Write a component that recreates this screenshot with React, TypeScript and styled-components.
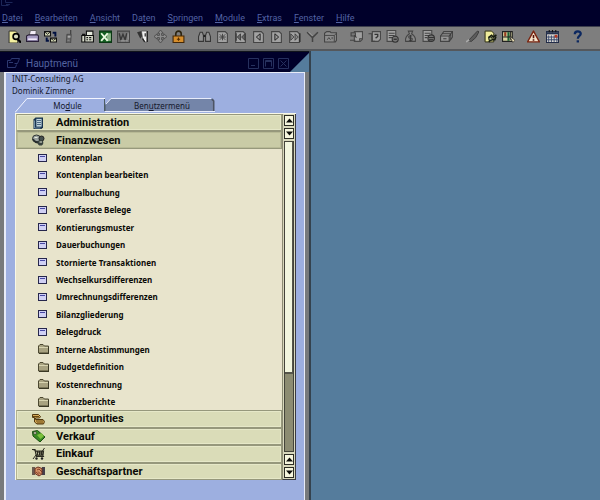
import React from 'react';
import styled, { createGlobalStyle, css } from 'styled-components';

const GlobalStyle = createGlobalStyle`
  * { box-sizing: border-box; }
  html, body { margin: 0; padding: 0; }
  body {
    font-family: "Noto Sans", "Open Sans", "DejaVu Sans", sans-serif;
    background: #557c9c;
  }
  button { font: inherit; color: inherit; border: 0; padding: 0; margin: 0; background: none; }
  svg { display: block; }
`;

/* ---------- icons ---------- */

const page = (stroke: string, fill: string) => (
  <path d="M1.500 1.500h7l2 2v8h-9z" fill={fill} stroke={stroke} />
);

const toolIcons: Record<string, React.ReactNode> = {
  preview: (
    <>
      <path d="M1 1h6l2 2v9H1z" fill="#f4f0a0" stroke="#222" strokeWidth=".8" />
      <circle cx="7.4" cy="6" r="2.7" fill="#d8dcc0" stroke="#000" strokeWidth="1.5" />
      <path d="M9 8.500l3 3.200" stroke="#000" strokeWidth="2" />
    </>
  ),
  print: (
    <>
      <path d="M3 5l1-4.500h5.500L9 5z" fill="#f4eef8" stroke="#555" strokeWidth=".8" />
      <path d="M.5 5.500l2-1h8l1 1v5H.500z" fill="#a49ac0" stroke="#2a2038" />
      <path d="M2 8.500h8" stroke="#f0e8f8" strokeWidth="1.500" />
    </>
  ),
  mail: (
    <>
      <path d="M.5 1.500h5.500v4H.500z" fill="#d8dcb8" stroke="#111" />
      <path d="M6 7.500h5.500v3.500H6z" fill="#d8dcb8" stroke="#111" />
      <path d="M8 2.500h2.500V6M2.500 7v3h2" fill="none" stroke="#001040" strokeWidth="1.800" />
      <path d="M1 2l2.300 2L5.500 2M6.500 8l2.200 1.500L11 8" fill="none" stroke="#111" strokeWidth=".8" />
    </>
  ),
  phone: (
    <>
      <path d="M8 0v4" stroke="#444" strokeWidth="1.200" />
      <path d="M4.500 4h4L8 12H4z" fill="#656565" stroke="#484848" strokeWidth=".8" />
      <path d="M5.500 5.500h2v1.500h-2zM5 9.500h2" fill="#b4b4b4" stroke="#a0a0a0" strokeWidth=".6" />
    </>
  ),
  fax: (
    <>
      <path d="M5 1h6v4H5z" fill="#e4e8dc" stroke="#111" />
      <path d="M.7 5h10.800v6H.700z" fill="#d4d8c8" stroke="#111" />
      <path d="M1 4h2.500v7M5 7h1.500M7.500 7H9.500M5 9h1.500M7.500 9H9.500" fill="none" stroke="#111" strokeWidth="1.100" />
    </>
  ),
  excel: (
    <>
      <path d="M.5 1h11v10.500H.500z" fill="#135c20" stroke="#0b3614" />
      <path d="M7 3h4v7H7z" fill="#8cb488" />
      <path d="M2 3l6 7M8 3l-6 7" stroke="#eafae0" strokeWidth="1.700" />
    </>
  ),
  word: (
    <>
      <path d="M.5 1h11v10.500H.500z" fill="#747474" stroke="#464646" />
      <path d="M2 3l1.500 6L5.500 4l2 5L9 3" fill="none" stroke="#383838" strokeWidth="1.300" />
      <path d="M3 10h7M10.300 3v6" stroke="#a4a4a4" strokeWidth=".8" />
    </>
  ),
  report: (
    <>
      <path d="M1 2l4-1 3 1-4 6z" fill="#333" />
      <path d="M5 1l5 0v10L8 11 6 7z" fill="#eee" stroke="#444" strokeWidth=".6" />
      <path d="M8.500 3v3M6 8l2 3M10.500 1v10" stroke="#222" strokeWidth="1.100" />
    </>
  ),
  move: (
    <path d="M6 0l2.500 3H7v2h2V3.500L12 6 9 8.500V7H7v2h1.500L6 12 3.500 9H5V7H3v1.500L0 6l3-2.500V5h2V3H3.500z" fill="#8c8c8c" stroke="#4a4a4a" strokeWidth=".8" />
  ),
  lock: (
    <>
      <path d="M3.500 6V3.500a2.500 2.500 0 0 1 5 0V6" fill="none" stroke="#2c2410" strokeWidth="1.500" />
      <path d="M1 5.500h10v6H1z" fill="#d68e2c" stroke="#442808" />
      <path d="M6 7v3M4.500 8.500h3" stroke="#542c00" />
    </>
  ),
  find: (
    <>
      <path d="M2 2h2l1 3v5.500H.500V6zM8 2h2l1.500 4v4.500H7V5z" fill="#909090" stroke="#363636" />
      <path d="M5 5.500h2" stroke="#222" strokeWidth="2" />
    </>
  ),
  add: (<>{page('#444', '#a2a2a2')}<path d="M3.500 4l5 5M8.500 4l-5 5M6 3.500v6M3 6.500h6" stroke="#444" strokeWidth=".9" /></>),
  first: (<>{page('#444', '#a2a2a2')}<path d="M6 3.500v6L3 6.500zM10 3.500v6L7 6.500z" fill="#666" stroke="#222" strokeWidth=".6" /><path d="M2 3v7" stroke="#333" /></>),
  prev: (<>{page('#444', '#a2a2a2')}<path d="M7.500 3.500v6L4 6.500z" fill="#999" stroke="#222" strokeWidth=".9" /></>),
  next: (<>{page('#444', '#a2a2a2')}<path d="M4.500 3.500v6L8 6.500z" fill="#999" stroke="#222" strokeWidth=".9" /></>),
  last: (<>{page('#444', '#a2a2a2')}<path d="M2.500 3.500v6l3-3zM6.500 3.500v6l3-3z" fill="#888" stroke="#222" strokeWidth=".6" /><path d="M11 3v8" stroke="#222" /></>),
  filter: (<><path d="M1 2l5 5 5-5M6 6.500V11" fill="none" stroke="#444" strokeWidth="1.400" /><path d="M2.500 2L6 5.500" stroke="#aaa" strokeWidth=".8" /></>),
  sort: (
    <>
      <path d="M.5 3l2-1.500h3l1 1h5v7l-1 1.500h-10z" fill="#8c8c8c" stroke="#444" />
      <path d="M.5 5h9v6M9.500 5l2-2M3 9l1.500-2L6 9M7.500 6.500v2" fill="none" stroke="#444" strokeWidth=".9" />
    </>
  ),
  base: (<><path d="M4 1.500h7.500v7L9.500 10.500H4z" fill="#a0a0a0" stroke="#484848" /><path d="M1 2.500h4v3H1zM0 9.500h5" fill="#777" stroke="#444" /><path d="M4 5l2 2M9 10V8h2" stroke="#3a3a3a" fill="none" /></>),
  target: (<><path d="M4 1.500h7.500v7L9.500 10.500H4z" fill="#a0a0a0" stroke="#484848" /><path d="M.5 3.500h3v7h3" fill="none" stroke="#444" /><path d="M6 4h3v2L7 7.500" fill="none" stroke="#333" strokeWidth="1.200" /></>),
  gross: (<><path d="M1 .5h8v10H1z" fill="#a0a0a0" stroke="#484848" /><path d="M2.500 3H8M2.500 5H8M2.500 7H6" stroke="#444" /><circle cx="8.500" cy="8.500" r="2.800" fill="#777" stroke="#333" /><path d="M7 8.500h3" stroke="#222" /></>),
  pay: (<><path d="M4 1h4L7 3.500c3 2 4 4.500 3.500 7h-9C1 8 2 5.500 5 3.500z" fill="#858585" stroke="#444" /><path d="M7.500 5.500h-3v2h3v2h-3M6 4.500v6" fill="none" stroke="#333" strokeWidth=".8" /></>),
  volume: (<><path d="M1 .5h8v10H1z" fill="#a0a0a0" stroke="#484848" /><path d="M2.500 3H8M2.500 5H8M2.500 7H5" stroke="#444" /><circle cx="8.500" cy="7.500" r="3" fill="#777" stroke="#333" /><path d="M6 7h5M6.500 9h4" stroke="#222" strokeWidth=".8" /></>),
  boxes: (<><path d="M.5 5.500l3-4h8v5l-3 4h-8z" fill="#969696" stroke="#444" /><path d="M.5 5.500h8v5M8.500 5.500l3-4M2 3.500h8v5M3 8h3" fill="none" stroke="#3c3c3c" /></>),
  pencil: (<><path d="M2 10L10.500 1l1.500.500L9 7l-4 3.500z" fill="#5c5c5c" stroke="#383838" strokeWidth=".8" /><path d="M0 11l3-2" stroke="#aaa" strokeWidth="1.500" /></>),
  settings: (<><path d="M1 1h6l2 2v8H1z" fill="#f0ec9c" stroke="#2c2c10" strokeWidth=".9" /><path d="M4 7l3-2 1.500 1.500 3-2M4.500 11l1.500-2h4l1-3" fill="none" stroke="#161c10" strokeWidth="1.500" /><circle cx="6" cy="8" r="1.600" fill="#b4c08c" stroke="#161c10" /></>),
  query: (<><path d="M.5 1.500h9v9h-9z" fill="#d8d4a0" stroke="#222" /><path d="M2 2h2v4H2z" fill="#963c20" /><path d="M5 2h2v8H5z" fill="#1c6034" /><path d="M1 6.500h8M8 1v8" stroke="#222" /><path d="M7 5.500l5 4-2 2z" fill="#e8dcb4" stroke="#222" strokeWidth=".6" /></>),
  warn: (<><path d="M6 1l5.500 10H.500z" fill="#f6e4cc" stroke="#7a2410" strokeWidth="1.300" strokeLinejoin="round" /><path d="M6 4.500v3M6 8.500V10" stroke="#541008" strokeWidth="1.500" /></>),
  calendar: (<><path d="M.5 1.500h11v10H.500z" fill="#e0dcd4" stroke="#222c48" /><path d="M0 3h12" stroke="#26324e" strokeWidth="2" /><path d="M2.500 5v6M5 5v6M7.500 5v6M10 5v6M1 6.500h10M1 9h10" stroke="#3c4c70" strokeWidth=".9" /><path d="M8 4.500h2.500V7H8z" fill="#bc3820" /><path d="M3 0v2M6 0v2M9 0v2" stroke="#111" /></>),
  help: (<><path d="M3.500 4c0-3.500 5.500-3.500 5.500-.5C9 5.500 6.300 5.500 6.300 8" fill="none" stroke="#0c2860" strokeWidth="2.100" /><path d="M5.200 9.500h2.200v2H5.200z" fill="#0c2860" /></>),
};

const moduleIcons: Record<string, React.ReactNode> = {
  admin: (<><path d="M3.500 .500h7.500v10l-1.500 1.500H1.500V2.500z" fill="#16304c" /><path d="M4 1.500h6v8.500H4z" fill="#c0d4dc" stroke="#1c3c58" strokeWidth=".8" /><path d="M5 3.500h4M5 5.500h4M5 7.500h4" stroke="#3c5c78" strokeWidth=".9" /><path d="M2.500 3.500v7.500h6" stroke="#88a8bc" strokeWidth=".8" fill="none" /></>),
  finance: (<><ellipse cx="4.500" cy="4.500" rx="4" ry="3.500" fill="#9aa2a0" stroke="#2e3432" /><path d="M1 5c1 3 4 4 7 3" fill="none" stroke="#262c2c" strokeWidth="2" /><circle cx="9.500" cy="4.500" r="2.500" fill="#44504e" stroke="#222" /><circle cx="8.500" cy="8.700" r="2.800" fill="#38423e" /><path d="M2.500 3.500h3M7.500 8h2.500" stroke="#e8ecdc" strokeWidth="1.200" /></>),
  opportunity: (<><path d="M.5 1.500h6l2 2-1 1.500h-4v1.500H11l1.500 2-1 2.500H5L2.500 9V4.500h-2z" fill="#d8ac58" stroke="#523a10" /><path d="M1 3.500h6M4 8h7.500M5 10h6" stroke="#634612" /></>),
  sales: (<><path d="M.5 1.500l5-1L13 7l-5 5L1 6z" fill="#398a22" stroke="#194c12" /><path d="M5 5l4.500-2L12 6 8.500 9z" fill="#7cc03c" /><circle cx="3" cy="3" r="1.300" fill="#f0f0d0" stroke="#222" strokeWidth=".6" /></>),
  purchase: (<><path d="M0 1.500h3l1.500 7H12M3 3h8.500L11 7H4" fill="#6c6c58" stroke="#2a2a20" strokeWidth="1.200" /><path d="M12.500 0L9 5l3 4M1 11l3-4M5.500 3v4M7.500 3v4M9.500 3v4" fill="none" stroke="#2a2a20" /><circle cx="4.500" cy="10.500" r="1.200" fill="#222" /><circle cx="10" cy="10.500" r="1.200" fill="#222" /></>),
  partner: (<><path d="M0 2h3v8H0z" fill="#6a5a50" /><path d="M10 2h3v8h-3z" fill="#45404a" /><path d="M3 3.500l3-1.500 4 1.500V9l-3 2-4-2.500z" fill="#d89468" stroke="#6c3020" /><path d="M5 5l2-1 3 3M4 7l3 2.500M6 6.500L8.500 9" fill="none" stroke="#7a3420" strokeWidth=".9" /></>),
};

const FormIcon = () => (
  <svg width="9" height="8" viewBox="0 0 9 8" aria-hidden="true">
    <rect x=".5" y=".5" width="8" height="7" fill="#d0d0f4" stroke="#26264c" />
    <path d="M2 2.500h5" stroke="#4848a4" />
  </svg>
);

const FolderIcon = () => (
  <svg width="11" height="10" viewBox="0 0 11 10" aria-hidden="true">
    <path d="M.5 9V2l1.500-1.500h3L6.500 2h4V9z" fill="#a8a280" stroke="#4c4830" />
    <path d="M1 3.500h9" stroke="#d8d4b0" />
    <path d="M1 9.500h10M10.500 3v6" stroke="#3a3824" />
  </svg>
);

/* ---------- frame ---------- */

const Shell = styled.div`
  display: flex;
  flex-direction: column;
  min-height: 100vh;
`;

const TopBar = styled.header`
  background: #00002a;
  border-bottom: 1px solid #3c3e4c;
`;

const AppCaption = styled.div`
  height: 10px;
  padding-left: 1px;
`;

const MenuBar = styled.nav`
  display: flex;
  gap: 12px;
  height: 16px;
  padding-left: 2px;
  font-family: Roboto, "Noto Sans", sans-serif;
  font-size: 9px;
  line-height: 16px;
  color: #5363a4;
`;

const MenuButton = styled.button`
  white-space: nowrap;
  u { text-underline-offset: 1px; }
`;

const ToolBar = styled.div`
  display: flex;
  align-items: center;
  gap: 7px;
  height: 24px;
  padding: 0 5px 3px;
  background: #7e7e7e;
  border-bottom: 2px solid #55585c;
`;

const ToolGroup = styled.div<{ $width: number }>`
  display: flex;
  justify-content: space-between;
  width: ${(p) => p.$width}px;
`;

const ToolButton = styled.button`
  display: grid;
  place-items: center;
  width: 18px;
  height: 16px;
`;

const Workspace = styled.main`
  display: flex;
  flex: 1;
  background: #557c9c;
`;

const MenuWindow = styled.section`
  display: flex;
  flex-direction: column;
  width: 311px;
  border-right: 2px solid #34424e;
`;

const TitleBar = styled.div`
  display: flex;
  align-items: center;
  height: 21px;
  padding: 2px 20px 0 7px;
  background: linear-gradient(135deg, #00002a 0 calc(100% - 14px), #557c9c calc(100% - 13px));
  color: #5363a0;
  border-top: 1px solid #10141c;
`;

const WindowTitle = styled.h1`
  flex: 1;
  margin: 0 0 0 6px;
  font-family: Roboto, "Noto Sans", sans-serif;
  font-size: 10px;
  font-weight: 400;
`;

const WindowControls = styled.div`
  display: flex;
  gap: 4px;
`;

const Frame = styled.div`
  display: flex;
  flex: 1;
  flex-direction: column;
  background: #777a7c;
`;

const Body = styled.div`
  display: flex;
  flex: 1;
  flex-direction: column;
  margin: 0 4px;
  padding: 0 8px 20px 9px;
  background: #9dafe0;
  border: solid #e8ecf8;
  border-width: 1px 1px 0 2px;
`;

const Identity = styled.div`
  margin-left: -3px;
  font-size: 8px;
  line-height: 12px;
  color: #14182c;
`;

const Tabs = styled.div`
  display: flex;
  height: 16px;
`;

const tabText = css`
  font-size: 8px;
  line-height: 17px;
  color: #14182c;
`;

const Tab = styled.button<{ $active?: boolean }>`
  ${tabText}
  display: grid;
  width: ${(p) => (p.$active ? 90 : 110)}px;
  height: 16px;
  > * { grid-area: 1 / 1; }
  > span { padding-left: ${(p) => (p.$active ? 15 : 4)}px; }
`;

const TreeBox = styled.div`
  display: flex;
  flex: 1;
  border-top: 1px solid #f8f8e8;
  border-left: 1px solid #f8f8e8;
  background: #e8e4cc;
`;

const Tree = styled.ul`
  display: grid;
  flex: 1;
  grid-auto-rows: minmax(16px, 1fr);
  margin: 0;
  padding: 0;
  list-style: none;
`;

const ModuleRow = styled.button<{ $open?: boolean }>`
  display: flex;
  align-items: center;
  width: 100%;
  height: 100%;
  padding-left: 14px;
  border: 1px solid #96987c;
  border-left: 2px solid #b4b490;
  outline: 1px solid ${(p) => (p.$open ? '#b8ba96' : '#e6e8c8')};
  outline-offset: -2px;
  background: ${(p) => (p.$open ? '#c9cba6' : '#dadcb8')};
  font-family: Roboto, "Noto Sans", sans-serif;
  font-size: 11px;
  font-weight: 700;
  color: #0a0a06;
  text-align: left;
`;

const ModuleIcon = styled.span`
  width: 24px;
`;

const EntryRow = styled.button`
  display: flex;
  align-items: center;
  width: 100%;
  height: 100%;
  padding-left: 22px;
  font-size: 8px;
  font-weight: 700;
  color: #0a0a06;
  text-align: left;
`;

const EntryIcon = styled.span`
  width: 18px;
`;

const ScrollBar = styled.div`
  display: flex;
  flex-direction: column;
  gap: 2px;
  width: 14px;
  padding: 1px;
  background: #d8d8bc;
  border-right: 1px solid #3c3c40;
  border-left: 1px solid #8c8c74;
  border-bottom: 1px solid #3c3c40;
`;

const ScrollButton = styled.button`
  display: grid;
  place-items: center;
  height: 11px;
  background: #f6f6de;
  border: 1px solid #2c2c24;
`;

const Track = styled.div`
  flex: 1;
  background: #8c8c72;
  border: 1px solid #44443a;
`;

const Thumb = styled.div`
  height: 75%;
  background: #f2f6de;
  border: solid #55554a;
  border-width: 0 1px 2px 0;
`;

/* ---------- data ---------- */

const menus: [string, string, string][] = [
  ['', 'D', 'atei'],
  ['', 'B', 'earbeiten'],
  ['', 'A', 'nsicht'],
  ['Da', 't', 'en'],
  ['', 'S', 'pringen'],
  ['', 'M', 'odule'],
  ['', 'E', 'xtras'],
  ['', 'F', 'enster'],
  ['', 'H', 'ilfe'],
];

const toolGroups = [
  { width: 183, items: ['preview', 'print', 'mail', 'phone', 'fax', 'excel', 'word', 'report', 'move', 'lock'] },
  { width: 145, items: ['find', 'add', 'first', 'prev', 'next', 'last', 'filter', 'sort'] },
  { width: 109, items: ['base', 'target', 'gross', 'pay', 'volume', 'boxes'] },
  { width: 54, items: ['pencil', 'settings', 'query'] },
  { width: 37, items: ['warn', 'calendar'] },
  { width: 18, items: ['help'] },
];

type Item = { label: string; icon?: string; open?: boolean; kind: 'module' | 'form' | 'folder' };

const items: Item[] = [
  { label: 'Administration', icon: 'admin', kind: 'module' },
  { label: 'Finanzwesen', icon: 'finance', kind: 'module', open: true },
  ...['Kontenplan', 'Kontenplan bearbeiten', 'Journalbuchung', 'Vorerfasste Belege', 'Kontierungsmuster',
    'Dauerbuchungen', 'Stornierte Transaktionen', 'Wechselkursdifferenzen', 'Umrechnungsdifferenzen',
    'Bilanzgliederung', 'Belegdruck'].map((label) => ({ label, kind: 'form' as const })),
  ...['Interne Abstimmungen', 'Budgetdefinition', 'Kostenrechnung', 'Finanzberichte']
    .map((label) => ({ label, kind: 'folder' as const })),
  { label: 'Opportunities', icon: 'opportunity', kind: 'module' },
  { label: 'Verkauf', icon: 'sales', kind: 'module' },
  { label: 'Einkauf', icon: 'purchase', kind: 'module' },
  { label: 'Geschäftspartner', icon: 'partner', kind: 'module' },
];

const Arrow = ({ down }: { down?: boolean }) => (
  <svg width="7" height="5" viewBox="0 0 7 5" aria-hidden="true">
    <path d={down ? 'M0 .5h7L3.500 4.500z' : 'M0 4.500h7L3.500 .500z'} fill="#0c0c08" />
  </svg>
);

const ControlIcon = ({ d }: { d: string }) => (
  <svg width="11" height="11" viewBox="0 0 11 11" fill="none" stroke="#26305e" aria-hidden="true">
    <path d="M.5 .5h10v10H.5z" />
    <path d={d} />
  </svg>
);

export default function App() {
  return (
    <Shell>
      <GlobalStyle />
      <TopBar>
        <AppCaption>
          <svg width="13" height="6" viewBox="0 0 13 6" fill="none" stroke="#1c2658" aria-hidden="true">
            <path d="M.5 0v5.500h7M4.500 0v2.500h7M5 4.500h4" />
          </svg>
        </AppCaption>
        <MenuBar aria-label="Hauptleiste">
          {menus.map(([before, key, after]) => (
            <MenuButton key={key} type="button">{before}<u>{key}</u>{after}</MenuButton>
          ))}
        </MenuBar>
      </TopBar>
      <ToolBar role="toolbar">
        {toolGroups.map((group) => (
          <ToolGroup key={group.items[0]} $width={group.width}>
            {group.items.map((name) => (
              <ToolButton key={name} type="button" aria-label={name}>
                <svg width="13" height="13" viewBox="0 0 12 12" fill="none">{toolIcons[name]}</svg>
              </ToolButton>
            ))}
          </ToolGroup>
        ))}
      </ToolBar>
      <Workspace>
        <MenuWindow>
          <TitleBar>
            <svg width="13" height="10" viewBox="0 0 13 10" fill="none" stroke="#2c3870" aria-hidden="true">
              <path d="M4.500 .500h8l-2 5h-3M4.500 .500l-1 2h-3v7h8l1-3M2 4.500h4" />
            </svg>
            <WindowTitle>Hauptmenü</WindowTitle>
            <WindowControls>
              <button type="button" aria-label="Minimieren"><ControlIcon d="M3 7.500h4" /></button>
              <button type="button" aria-label="Maximieren"><ControlIcon d="M2.500 8.500v-6h6v6M2.500 3.500h6" /></button>
              <button type="button" aria-label="Schließen"><ControlIcon d="M2.500 2.500l6 6M8.500 2.500l-6 6" /></button>
            </WindowControls>
          </TitleBar>
          <Frame>
            <Body>
              <Identity>
                <div>INIT-Consulting AG</div>
                <div>Dominik Zimmer</div>
              </Identity>
              <Tabs role="tablist">
                <Tab type="button" role="tab" aria-selected="true" $active>
                  <svg width="90" height="16" viewBox="0 0 90 16" fill="none" aria-hidden="true">
                    <path d="M0 15.500L12 1.500h78" stroke="#f4f6ff" />
                    <path d="M89.500 2v12" stroke="#4c5c64" />
                  </svg>
                  <span>Mo<u>d</u>ule</span>
                </Tab>
                <Tab type="button" role="tab" aria-selected="false">
                  <svg width="110" height="16" viewBox="0 0 110 16" fill="none" aria-hidden="true">
                    <path d="M0 14V7l6-5h101v12z" fill="#7485a9" />
                    <path d="M1 7l5-5.500h100" stroke="#e8ecfa" />
                    <path d="M0 8v6" stroke="#4c5c64" />
                    <path d="M107 2l1.500 2v10" stroke="#4c5464" strokeWidth="2" />
                    <path d="M0 14.500h110" stroke="#e8ecfa" />
                  </svg>
                  <span>Ben<u>u</u>tzermenü</span>
                </Tab>
              </Tabs>
              <TreeBox>
                <Tree>
                  {items.map((item) => (
                    <li key={item.label}>
                      {item.kind === 'module' ? (
                        <ModuleRow type="button" $open={item.open} aria-expanded={!!item.open}>
                          <ModuleIcon>
                            <svg width="13" height="12" viewBox="0 0 13 12" fill="none" aria-hidden="true">
                              {moduleIcons[item.icon!]}
                            </svg>
                          </ModuleIcon>
                          {item.label}
                        </ModuleRow>
                      ) : (
                        <EntryRow type="button">
                          <EntryIcon>{item.kind === 'form' ? <FormIcon /> : <FolderIcon />}</EntryIcon>
                          {item.label}
                        </EntryRow>
                      )}
                    </li>
                  ))}
                </Tree>
                <ScrollBar>
                  <ScrollButton type="button" aria-label="Nach oben"><Arrow /></ScrollButton>
                  <ScrollButton type="button" aria-label="Nach unten"><Arrow down /></ScrollButton>
                  <Track><Thumb /></Track>
                  <ScrollButton type="button" aria-label="Seite nach oben"><Arrow /></ScrollButton>
                  <ScrollButton type="button" aria-label="Seite nach unten"><Arrow down /></ScrollButton>
                </ScrollBar>
              </TreeBox>
            </Body>
          </Frame>
        </MenuWindow>
      </Workspace>
    </Shell>
  );
}
